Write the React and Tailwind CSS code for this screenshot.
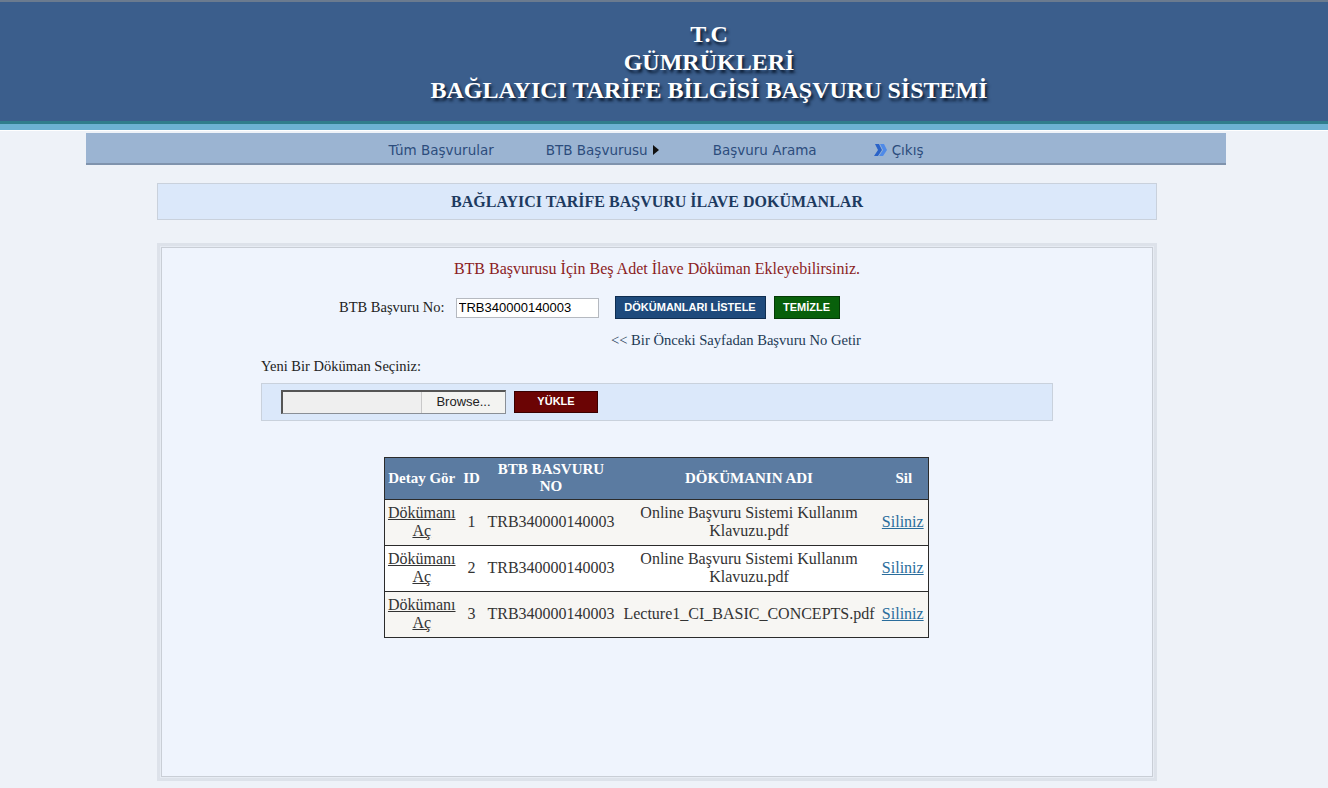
export default function App() {
  const serif = { fontFamily: '"Liberation Serif", "Times New Roman", serif' };
  const rows = [
    { id: 1, no: "TRB340000140003", name: "Online Başvuru Sistemi Kullanım Klavuzu.pdf", bg: "bg-[#f7f6f3]" },
    { id: 2, no: "TRB340000140003", name: "Online Başvuru Sistemi Kullanım Klavuzu.pdf", bg: "bg-white" },
    { id: 3, no: "TRB340000140003", name: "Lecture1_CI_BASIC_CONCEPTS.pdf", bg: "bg-[#f7f6f3]" },
  ];

  return (
    <div className="min-h-screen h-[788px] overflow-hidden bg-[#eef2f8] font-['Liberation_Sans',Arial,sans-serif]">
      {/* HEADER */}
      <div className="border-t-2 border-[#6b7b8f] bg-[#3b5e8c] h-[121px] flex flex-col items-center justify-center pl-[90px]">
        <div
          className="text-white font-bold text-[24px] leading-[28px] text-center pt-[1px] [text-shadow:2px_3px_3px_#0a1a30]"
          style={serif}
        >
          <div>T.C</div>
          <div>GÜMRÜKLERİ</div>
          <div>BAĞLAYICI TARİFE BİLGİSİ BAŞVURU SİSTEMİ</div>
        </div>
      </div>
      <div className="h-[3px] bg-[#2f7d8c]" />
      <div className="h-[6px] bg-[#6cb1d2]" />
      <div className="h-[1px] bg-white" />

      {/* NAV */}
      <div className="mx-[86px] mt-[2px] w-[1140px] h-[32px] bg-[#9bb4d2] border-b-2 border-[#7f93ad] flex items-center justify-center text-[13.5px] text-[#2c4c7c] font-['DejaVu_Sans',Verdana,sans-serif] pt-[4px]">
        <span className="mr-[52px]">Tüm Başvurular</span>
        <span className="mr-[54px] flex items-center">
          BTB Başvurusu
          <svg width="6" height="10" viewBox="0 0 6 10" className="ml-[5px]">
            <path d="M0 0 L6 5 L0 10 Z" fill="#111" />
          </svg>
        </span>
        <span className="mr-[56px]">Başvuru Arama</span>
        <span className="flex items-center">
          <svg width="16" height="14" viewBox="0 0 16 14" className="mr-[3px]">
            <path d="M2 1 L6 1 L9 7 L5 13 L1 13 L5 7 Z" fill="#2b63c8" />
            <path d="M7 1 L11 1 L14 7 L10 13 L6 13 L10 7 Z" fill="#4f8ae8" />
          </svg>
          Çıkış
        </span>
      </div>

      {/* TITLE */}
      <div className="mx-[157px] mt-[18px] w-[1000px] h-[37px] bg-[#dbe8fa] border border-[#c9d1dc] flex items-center justify-center">
        <span className="font-bold text-[16px] text-[#1d3a60]" style={serif}>
          BAĞLAYICI TARİFE BAŞVURU İLAVE DOKÜMANLAR
        </span>
      </div>

      {/* PANEL */}
      <div className="mx-[157px] mt-[23px] w-[1000px] h-[538px] border-[3px] border-[#dde2ea] p-[1px] bg-[#e6ebf3]">
        <div className="h-full border border-[#c9ced6] bg-[#eff4fd] flex flex-col items-center" style={serif}>
          <div className="mt-[11px] text-[16px] text-[#8b1d1d] leading-[20px]">
            BTB Başvurusu İçin Beş Adet İlave Döküman Ekleyebilirsiniz.
          </div>

          <div className="mt-[17px] flex items-center w-full">
            <span className="ml-[177px] text-[14.5px] text-[#222]">BTB Başvuru No:</span>
            <input
              readOnly
              value="TRB340000140003"
              className="ml-[11px] w-[143px] h-[20px] bg-white border border-[#b5b9c0] px-[2px] text-[13px] text-black font-['Liberation_Sans',Arial,sans-serif] outline-none"
            />
            <button className="ml-[16px] w-[151px] h-[23px] bg-[#1e4a7c] border border-[#0f2d50] text-white text-[11px] font-bold font-['Liberation_Sans',Arial,sans-serif]">
              DÖKÜMANLARI LİSTELE
            </button>
            <button className="ml-[8px] w-[66px] h-[23px] bg-[#08600b] border border-[#043a06] text-white text-[11px] font-bold font-['Liberation_Sans',Arial,sans-serif]">
              TEMİZLE
            </button>
          </div>

          <div className="mt-[11px] w-full flex">
            <span className="ml-[449px] text-[14.6px] text-[#1d3a55]">
              &lt;&lt; Bir Önceki Sayfadan Başvuru No Getir
            </span>
          </div>

          <div className="mt-[4px] w-full">
            <div className="ml-[99px] text-[14.5px] text-[#222]">Yeni Bir Döküman Seçiniz:</div>
            <div className="ml-[99px] mt-[5px] w-[792px] h-[38px] bg-[#dbe8fa] border border-[#c9d1dc] flex items-center">
              <div className="ml-[19px] flex h-[24px] border border-[#8a8f96] border-t-2 border-l-2 border-t-[#555] border-l-[#555]">
                <div className="w-[138px] bg-[#efefef]" />
                <div className="w-[84px] bg-[#f3f3f1] border-l border-[#c9c9c9] flex items-center justify-center text-[13px] text-[#222] font-['Liberation_Sans',Arial,sans-serif]">
                  Browse...
                </div>
              </div>
              <button className="ml-[8px] w-[84px] h-[22px] bg-[#6b0404] border border-[#3a0000] text-white text-[11px] font-bold font-['Liberation_Sans',Arial,sans-serif]">
                YÜKLE
              </button>
            </div>
          </div>

          {/* TABLE */}
          <table className="mt-[36px] -ml-[2px] border border-[#2b2b2b] border-collapse text-[16px] text-[#333] w-[545px]">
            <thead>
              <tr className="bg-[#5b7ba1] text-white text-[15px] h-[42px]">
                <th className="font-bold w-[75px] leading-[17px]">Detay Gör</th>
                <th className="font-bold w-[25px]">ID</th>
                <th className="font-bold w-[134px] leading-[17px]">BTB BASVURU<br />NO</th>
                <th className="font-bold">DÖKÜMANIN ADI</th>
                <th className="font-bold w-[48px]">Sil</th>
              </tr>
            </thead>
            <tbody>
              {rows.map((r) => (
                <tr key={r.id} className={`${r.bg} border-t border-[#2b2b2b] h-[46px] leading-[18px]`}>
                  <td className="text-center underline text-[#333]">Dökümanı<br />Aç</td>
                  <td className="text-center">{r.id}</td>
                  <td className="text-center">{r.no}</td>
                  <td className="text-center px-[2px]">{r.name}</td>
                  <td className="text-center underline text-[#2a6d9c] pr-[2px]">Siliniz</td>
                </tr>
              ))}
            </tbody>
          </table>
        </div>
      </div>
    </div>
  );
}
